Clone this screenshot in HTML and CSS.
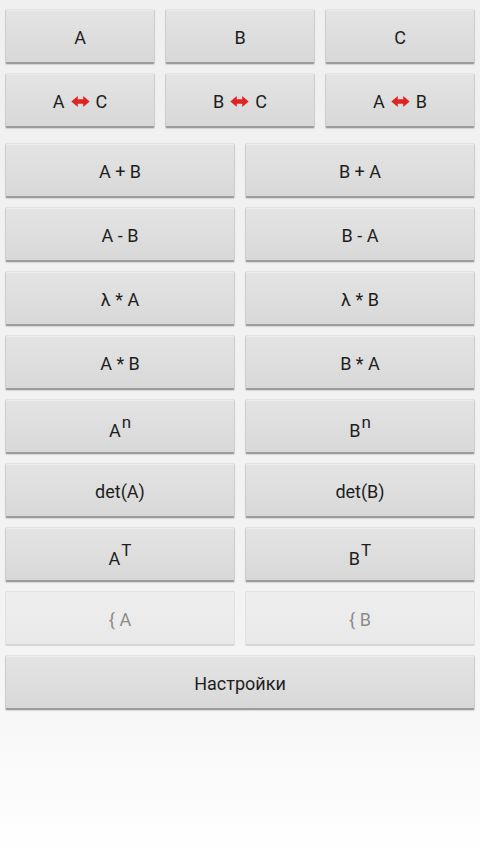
FILE: index.html
```html
<!DOCTYPE html>
<html lang="ru">
<head>
  <meta charset="UTF-8" />
  <meta name="viewport" content="width=device-width, initial-scale=1.0"/>
  <title>Матрицы</title>
  <link rel="stylesheet" href="styles.css">
</head>
<body>

  <div class="grid three">
    <button>A</button>
    <button>B</button>
    <button>C</button>
    <button>A<svg class="swap" viewBox="0 0 20 12"><path d="M0 6 L7 0 V3.5 H13 V0 L20 6 L13 12 V8.5 H7 V12 Z"/></svg>C</button>
    <button>B<svg class="swap" viewBox="0 0 20 12"><path d="M0 6 L7 0 V3.5 H13 V0 L20 6 L13 12 V8.5 H7 V12 Z"/></svg>C</button>
    <button>A<svg class="swap" viewBox="0 0 20 12"><path d="M0 6 L7 0 V3.5 H13 V0 L20 6 L13 12 V8.5 H7 V12 Z"/></svg>B</button>
  </div>

  <div class="grid two">
    <button>A + B</button>
    <button>B + A</button>
    <button>A - B</button>
    <button>B - A</button>
    <button>λ * A</button>
    <button>λ * B</button>
    <button>A * B</button>
    <button>B * A</button>
    <button><span>A<sup>n</sup></span></button>
    <button><span>B<sup>n</sup></span></button>
    <button>det(A)</button>
    <button>det(B)</button>
    <button><span>A<sup>T</sup></span></button>
    <button><span>B<sup>T</sup></span></button>
    <button disabled>{ A</button>
    <button disabled>{ B</button>
    <button class="wide">Настройки</button>
  </div>

</body>
</html>
```

FILE: styles.css
```css
* {
  box-sizing: border-box;
}

html {
  min-height: 100%;
  background: linear-gradient(#f0f0f0 0%, #f3f3f3 75%, #ffffff 100%);
}

body {
  margin: 0;
  padding: 9px 5px;
  font-family: Roboto, "Noto Sans", sans-serif;
  min-height: 854px;
}

.grid {
  display: grid;
  column-gap: 10px;
  row-gap: 9px;
}

.three {
  grid-template-columns: repeat(3, 1fr);
  margin-bottom: 15px;
}

.two {
  grid-template-columns: repeat(2, 1fr);
}

.wide {
  grid-column: 1 / -1;
}

button {
  height: 55px;
  padding: 2px 0 0;
  font-family: inherit;
  font-size: 18px;
  color: #1e1e1e;
  background: linear-gradient(#e4e4e4, #d8d8d8);
  border: 1px solid #cdcdcd;
  border-top-color: #e2e2e2;
  border-bottom: 2px solid #9c9c9c;
  border-radius: 2px;
  box-shadow: 0 1px 1px rgba(0, 0, 0, 0.12), inset 0 1px 0 #ececec;
  display: flex;
  align-items: center;
  justify-content: center;
}

button:disabled {
  color: #8c8c8c;
  background: linear-gradient(#eeeeee, #e9e9e9);
  border-color: #e2e2e2;
  border-bottom: 2px solid #d6d6d6;
  box-shadow: none;
}

button sup {
  font-size: 17px;
  position: relative;
  top: -2px;
  margin-left: 1px;
}

.swap {
  width: 19px;
  height: 11px;
  margin: 0 6px;
  fill: #e02424;
}
```
